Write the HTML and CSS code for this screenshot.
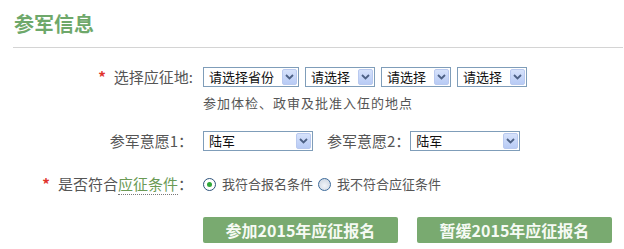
FILE: index.html
```html
<!DOCTYPE html>
<html lang="zh-CN">
<head>
<meta charset="utf-8">
<title>参军信息</title>
<link rel="stylesheet" href="styles.css">
</head>
<body>
<div class="page">
  <h2 class="title">参军信息</h2>
  <div class="form">
    <div class="row row-place">
      <div class="label"><span class="req">*</span>选择应征地:</div>
      <div class="ctrl">
        <div class="selects">
          <div class="sel w95"><span class="sel-text">请选择省份</span><span class="sel-btn"><svg width="9" height="6" viewBox="0 0 9 6"><path d="M1 1 L4.5 4.5 L8 1" fill="none" stroke="#4d6185" stroke-width="1.8"/></svg></span></div>
          <div class="sel w70"><span class="sel-text">请选择</span><span class="sel-btn"><svg width="9" height="6" viewBox="0 0 9 6"><path d="M1 1 L4.5 4.5 L8 1" fill="none" stroke="#4d6185" stroke-width="1.8"/></svg></span></div>
          <div class="sel w70"><span class="sel-text">请选择</span><span class="sel-btn"><svg width="9" height="6" viewBox="0 0 9 6"><path d="M1 1 L4.5 4.5 L8 1" fill="none" stroke="#4d6185" stroke-width="1.8"/></svg></span></div>
          <div class="sel w70"><span class="sel-text">请选择</span><span class="sel-btn"><svg width="9" height="6" viewBox="0 0 9 6"><path d="M1 1 L4.5 4.5 L8 1" fill="none" stroke="#4d6185" stroke-width="1.8"/></svg></span></div>
        </div>
        <div class="hint">参加体检、政审及批准入伍的地点</div>
      </div>
    </div>
    <div class="row row-wish">
      <div class="label">参军意愿1：</div>
      <div class="ctrl inline">
        <div class="sel w110"><span class="sel-text">陆军</span><span class="sel-btn"><svg width="9" height="6" viewBox="0 0 9 6"><path d="M1 1 L4.5 4.5 L8 1" fill="none" stroke="#4d6185" stroke-width="1.8"/></svg></span></div>
        <span class="label2">参军意愿2：</span>
        <div class="sel w110"><span class="sel-text">陆军</span><span class="sel-btn"><svg width="9" height="6" viewBox="0 0 9 6"><path d="M1 1 L4.5 4.5 L8 1" fill="none" stroke="#4d6185" stroke-width="1.8"/></svg></span></div>
      </div>
    </div>
    <div class="row row-cond">
      <div class="label"><span class="req">*</span>是否符合<span class="link">应征条件</span>：</div>
      <div class="ctrl inline">
        <span class="radio on"></span><span class="rtext">我符合报名条件</span>
        <span class="radio off"></span><span class="rtext">我不符合应征条件</span>
      </div>
    </div>
    <div class="row row-btns">
      <div class="label"></div>
      <div class="ctrl inline btns">
        <button class="btn">参加2015年应征报名</button>
        <button class="btn">暂缓2015年应征报名</button>
      </div>
    </div>
  </div>
</div>
</body>
</html>
```
FILE: styles.css
```css
html, body {
  margin: 0;
  padding: 0;
  background: #ffffff;
}
body {
  font-family: "Microsoft YaHei", "Noto Sans CJK SC", "Noto Sans", sans-serif;
  color: #555555;
  width: 624px;
  height: 249px;
  overflow: hidden;
}
.page {
  padding: 12px 1px 0 13px;
}
.title {
  margin: 0;
  font-size: 20px;
  line-height: 24px;
  font-weight: bold;
  color: #6ea86a;
  padding-left: 1px;
  padding-bottom: 11px;
  border-bottom: 1px solid #d4d4d4;
}
.form {
  padding-top: 19px;
}
.row {
  display: grid;
  grid-template-columns: 180px 1fr;
  column-gap: 10px;
}
.label {
  text-align: right;
  font-size: 15px;
  line-height: 20px;
  color: #555555;
  white-space: nowrap;
}
.req {
  color: #e0322c;
  font-weight: bold;
  margin-right: 8px;
}
.link {
  color: #6a9a55;
  border-bottom: 1px dotted #777;
}
.ctrl {
  display: flex;
  flex-direction: column;
}
.ctrl.inline {
  flex-direction: row;
  align-items: center;
}
.selects {
  display: flex;
  gap: 6px;
}
.sel {
  box-sizing: border-box;
  height: 20px;
  border: 1px solid #7f9db9;
  background: #fff;
  display: flex;
  align-items: center;
  justify-content: space-between;
  padding: 1px;
}
.w95 { width: 96px; }
.w70 { width: 70px; }
.w110 { width: 110px; }
.sel-text {
  font-size: 13px;
  line-height: 16px;
  color: #111;
  padding-left: 4px;
  white-space: nowrap;
}
.sel-btn {
  width: 15px;
  height: 16px;
  box-sizing: border-box;
  border: 1px solid #b9c9ef;
  border-radius: 2px;
  background: linear-gradient(#d6e2fb, #b8cbf5);
  display: flex;
  align-items: center;
  justify-content: center;
}
.hint {
  margin-top: 8px;
  font-size: 13px;
  letter-spacing: 1px;
  line-height: 16px;
  color: #555555;
}
.row-wish {
  margin-top: 20px;
}
.label2 {
  font-size: 15px;
  line-height: 20px;
  color: #555555;
  margin-left: 14px;
  margin-right: 0;
  white-space: nowrap;
}
.row-cond {
  margin-top: 23px;
}
.radio {
  box-sizing: border-box;
  width: 13px;
  height: 13px;
  border-radius: 50%;
  display: inline-block;
  position: relative;
}
.radio.on {
  border: 1px solid #2d527a;
  background: #fff;
}
.radio.on::after {
  content: "";
  position: absolute;
  left: 3px;
  top: 3px;
  width: 5px;
  height: 5px;
  border-radius: 50%;
  background: #30a83a;
}
.radio.off {
  border: 1px solid #3c6a9a;
  background: radial-gradient(circle at 50% 60%, #f1f4f8 0, #c8d2de 100%);
  margin-left: 5px;
}
.rtext {
  font-size: 13px;
  line-height: 20px;
  color: #555555;
  margin-left: 6px;
  white-space: nowrap;
}
.row-btns {
  margin-top: 23px;
}
.btns {
  gap: 19px;
}
.btn {
  width: 195px;
  height: 26px;
  border: none;
  border-radius: 2px;
  background: #79aa70;
  color: #f6faf4;
  font-family: "Microsoft YaHei", "Noto Sans CJK SC", sans-serif;
  font-size: 16px;
  font-weight: bold;
  line-height: 26px;
  padding: 0;
}
```
